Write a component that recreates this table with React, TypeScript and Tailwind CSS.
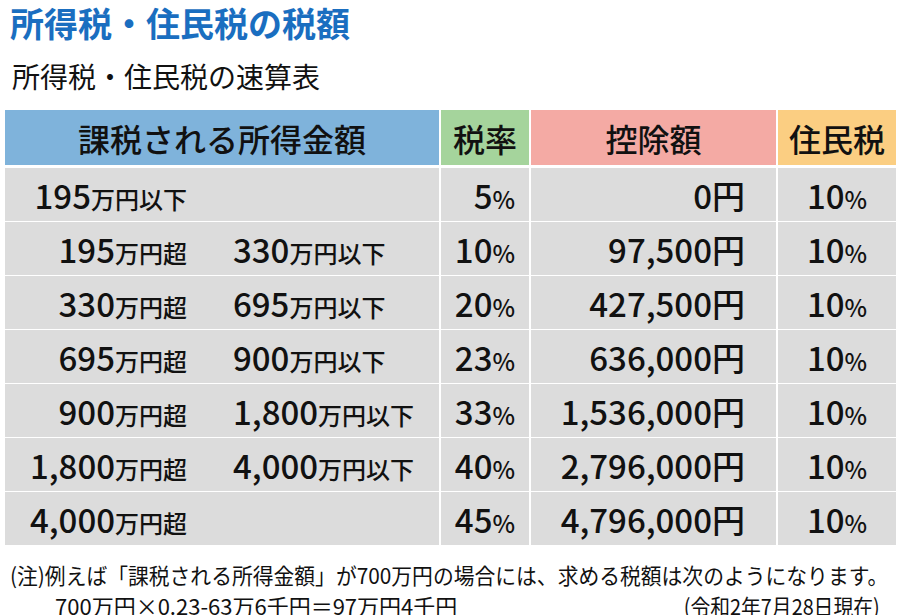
import React from 'react';

type Row = {
  from: string;
  fromUnit: string;
  to?: string;
  rate: string;
  deduction: string;
};

const rows: Row[] = [
  { from: '195', fromUnit: '万円以下', rate: '5', deduction: '0' },
  { from: '195', fromUnit: '万円超', to: '330', rate: '10', deduction: '97,500' },
  { from: '330', fromUnit: '万円超', to: '695', rate: '20', deduction: '427,500' },
  { from: '695', fromUnit: '万円超', to: '900', rate: '23', deduction: '636,000' },
  { from: '900', fromUnit: '万円超', to: '1,800', rate: '33', deduction: '1,536,000' },
  { from: '1,800', fromUnit: '万円超', to: '4,000', rate: '40', deduction: '2,796,000' },
  { from: '4,000', fromUnit: '万円超', rate: '45', deduction: '4,796,000' },
];

const Percent: React.FC<{ value: string }> = ({ value }) => (
  <span>
    {value}
    <span className="text-[24px]">%</span>
  </span>
);

const App: React.FC = () => {
  return (
    <div className="w-[900px] h-[615px] overflow-hidden bg-white text-[#111] font-['Noto_Sans_CJK_JP',sans-serif]">
      <h1 className="pl-[10px] pt-[1px] text-[34px] leading-[44px] font-bold text-[#1a6ec0]">
        所得税・住民税の税額
      </h1>
      <h2 className="pl-[12px] mt-[14px] text-[28px] leading-[34px]">所得税・住民税の速算表</h2>

      {/* Table */}
      <div className="ml-[5px] mt-[17px] w-[891px] font-medium">
        <div className="grid grid-cols-[434px_88px_245px_118px] gap-x-[2px] h-[55px] text-[32px]">
          <div className="bg-[#7fb3db] flex items-center justify-center">課税される所得金額</div>
          <div className="bg-[#a5d49c] flex items-center justify-center">税率</div>
          <div className="bg-[#f4aaa4] flex items-center justify-center">控除額</div>
          <div className="bg-[#fbce82] flex items-center justify-center">住民税</div>
        </div>

        <div className="mt-[3px] flex flex-col gap-y-[2px]">
          {rows.map((r, i) => (
            <div
              key={i}
              className="grid grid-cols-[434px_88px_245px_118px] gap-x-[2px] h-[52px] text-[33px]"
            >
              <div className="bg-[#dcdcdc] grid grid-cols-[182px_1fr] gap-x-[46px] items-center pt-[3px]">
                <div className="text-right whitespace-nowrap">
                  {r.from}
                  <span className="text-[24px]">{r.fromUnit}</span>
                </div>
                <div className="whitespace-nowrap">
                  {r.to && (
                    <>
                      {r.to}
                      <span className="text-[24px]">万円以下</span>
                    </>
                  )}
                </div>
              </div>
              <div className="bg-[#dcdcdc] flex items-center justify-end pr-[14px] pt-[3px]">
                <Percent value={r.rate} />
              </div>
              <div className="bg-[#dcdcdc] flex items-center justify-end pr-[31px] pt-[3px] whitespace-nowrap">
                {r.deduction}円
              </div>
              <div className="bg-[#dcdcdc] flex items-center justify-center pt-[3px]">
                <Percent value="10" />
              </div>
            </div>
          ))}
        </div>
      </div>

      {/* Note */}
      <div className="mt-[15px] pl-[10px] text-[22px] leading-[31px] whitespace-nowrap">
        <p className="origin-left scale-x-[0.945]">
          (注)例えば「課税される所得金額」が700万円の場合には、求める税額は次のようになります。
        </p>
        <div className="flex justify-between pr-[20px]">
          <p className="pl-[45px]">700万円×0.23-63万6千円＝97万円4千円</p>
          <p className="origin-right scale-x-[0.9]">(令和2年7月28日現在)</p>
        </div>
      </div>
    </div>
  );
};

export default App;
